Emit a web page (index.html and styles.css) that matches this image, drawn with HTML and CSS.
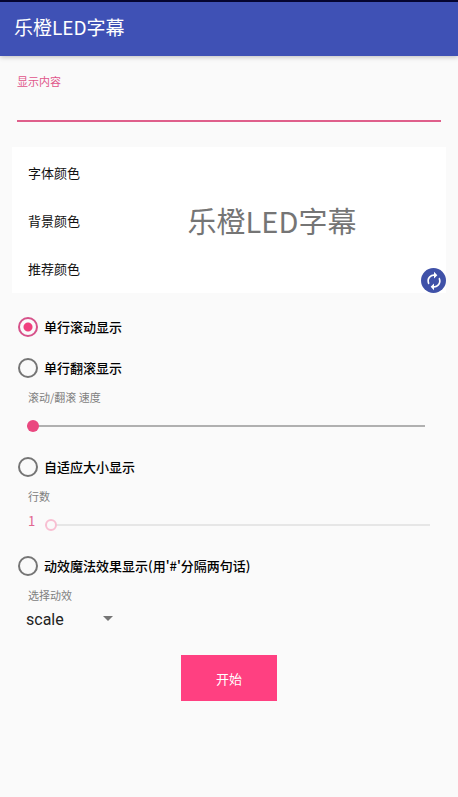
FILE: index.html
```html
<!DOCTYPE html>
<html lang="zh-CN">
<head>
    <meta charset="UTF-8">
    <meta name="viewport" content="width=device-width, initial-scale=1.0">
    <title>乐橙LED字幕</title>
    <link rel="stylesheet" href="styles.css">
</head>
<body>
    <header class="app-bar">
        <h1>乐橙LED字幕</h1>
    </header>

    <form class="settings">
        <div class="text-field">
            <label for="content">显示内容</label>
            <input type="text" id="content">
        </div>

        <div class="color-card">
            <div class="color-menu">
                <button type="button">字体颜色</button>
                <button type="button">背景颜色</button>
                <button type="button">推荐颜色</button>
            </div>
            <div class="preview">乐橙LED字幕</div>
            <button type="button" class="refresh" aria-label="刷新">
                <svg viewBox="0 0 24 24" width="20" height="20" fill="currentColor">
                    <path d="M12 6v3l4-4-4-4v3c-4.42 0-8 3.58-8 8 0 1.57.46 3.03 1.24 4.26L6.7 14.8c-.45-.83-.7-1.79-.7-2.8 0-3.31 2.69-6 6-6zm6.76 1.74L17.3 9.2c.44.84.7 1.79.7 2.8 0 3.31-2.69 6-6 6v-3l-4 4 4 4v-3c4.42 0 8-3.58 8-8 0-1.57-.46-3.03-1.24-4.26z"/>
                </svg>
            </button>
        </div>

        <div class="modes">
            <label class="mode"><input type="radio" name="mode" checked>单行滚动显示</label>

            <section class="group">
                <label class="mode"><input type="radio" name="mode">单行翻滚显示</label>
                <label class="caption" for="speed">滚动/翻滚 速度</label>
                <div class="slider-row">
                    <input type="range" class="slider" id="speed" min="0" max="100" value="0">
                </div>
            </section>

            <section class="group">
                <label class="mode"><input type="radio" name="mode">自适应大小显示</label>
                <label class="caption" for="lines">行数</label>
                <div class="slider-row lines-row">
                    <output class="line-count" id="lineCount" for="lines">1</output>
                    <input type="range" class="slider" id="lines" min="1" max="10" value="1" disabled>
                </div>
            </section>

            <section class="group">
                <label class="mode"><input type="radio" name="mode">动效魔法效果显示(用'#'分隔两句话)</label>
                <label class="caption" for="effect">选择动效</label>
                <div class="spinner">
                    <select id="effect">
                        <option>scale</option>
                    </select>
                </div>
            </section>
        </div>

        <button type="button" class="start">开始</button>
    </form>
</body>
</html>
```
FILE: styles.css
```css
* {
    box-sizing: border-box;
}
body {
    margin: 0;
    background-color: #fafafa;
    color: #111;
    font-family: "Noto Sans CJK SC", Roboto, sans-serif;
    font-size: 13px;
}
button, input, select {
    font-family: inherit;
    color: inherit;
    margin: 0;
}
button {
    border: none;
    padding: 0;
    background: none;
    font-size: 13px;
    cursor: pointer;
}

/* app bar */
.app-bar {
    display: flex;
    align-items: center;
    height: 56px;
    padding: 0 14px 6px;
    border-top: 2px solid #050530;
    background-color: #3f51b5;
    color: #fff;
    box-shadow: 0 1px 5px rgba(0,0,0,0.25);
}
.app-bar h1 {
    margin: 0;
    font-size: 19px;
    font-weight: 400;
}

.settings {
    display: flex;
    flex-direction: column;
    padding: 15px 12px;
}

/* content input */
.text-field {
    display: flex;
    flex-direction: column;
    margin: 0 5px;
}
.text-field label {
    color: #e0558a;
    font-size: 11px;
    line-height: 20px;
}
.text-field input {
    height: 31px;
    padding: 0;
    border: none;
    border-bottom: 2px solid #df5f8b;
    background: none;
    outline: none;
    font-size: 16px;
}

/* colors and preview */
.color-card {
    position: relative;
    display: flex;
    margin-top: 25px;
    padding: 1px 0;
    background-color: #fff;
}
.color-menu {
    display: flex;
    flex-direction: column;
    padding-left: 16px;
}
.color-menu button {
    height: 48px;
    text-align: left;
}
.preview {
    flex: 1;
    display: flex;
    align-items: center;
    justify-content: center;
    padding-left: 18px;
    color: #757575;
    font-size: 29px;
}
.refresh {
    position: absolute;
    right: 0;
    bottom: 0;
    display: flex;
    align-items: center;
    justify-content: center;
    width: 25px;
    height: 25px;
    border-radius: 50%;
    background-color: #3f51a8;
    color: #fff;
}

/* display modes */
.modes {
    display: flex;
    flex-direction: column;
    padding: 13px 10px 0 6px;
}
.group {
    display: flex;
    flex-direction: column;
}
.mode {
    display: flex;
    align-items: center;
    gap: 6px;
    height: 41px;
    color: #000;
    font-weight: 500;
}
.mode input {
    appearance: none;
    width: 20px;
    height: 20px;
    border: 2px solid #757575;
    border-radius: 50%;
}
.mode input:checked {
    border-color: #d6528a;
    background: radial-gradient(circle, #f0407f 4px, transparent 5px);
}
.caption {
    padding-left: 10px;
    color: #808080;
    font-size: 11px;
    line-height: 18px;
}

/* sliders */
.slider-row {
    display: flex;
    align-items: center;
    height: 40px;
    padding: 0 11px 0 9px;
}
.slider {
    appearance: none;
    flex: 1;
    min-width: 0;
    height: 12px;
    background: linear-gradient(#b0b0b0, #b0b0b0) center / 100% 2px no-repeat;
}
.slider::-webkit-slider-thumb {
    appearance: none;
    width: 12px;
    height: 12px;
    border-radius: 50%;
    background-color: #ea4880;
}
.lines-row {
    padding: 0 6px 0 10px;
}
.line-count {
    width: 17px;
    padding-bottom: 10px;
    color: #e0668f;
}
.slider:disabled {
    background-image: linear-gradient(#e6e6e6, #e6e6e6);
}
.slider:disabled::-webkit-slider-thumb {
    border: 2px solid #f8bfd2;
    background-color: #fafafa;
}

/* effect drop-down */
.spinner {
    position: relative;
    width: 90px;
    margin-left: 8px;
}
.spinner::after {
    content: "";
    position: absolute;
    top: 12px;
    right: 3px;
    border: 5px solid transparent;
    border-top-color: #757575;
    border-bottom: none;
    pointer-events: none;
}
.spinner select {
    appearance: none;
    width: 100%;
    height: 30px;
    padding: 0;
    border: none;
    background: none;
    color: #222;
    font-family: Roboto, sans-serif;
    font-size: 16px;
}

.start {
    align-self: center;
    width: 96px;
    height: 46px;
    margin-top: 21px;
    background-color: #ff4081;
    color: #fff;
}
```
